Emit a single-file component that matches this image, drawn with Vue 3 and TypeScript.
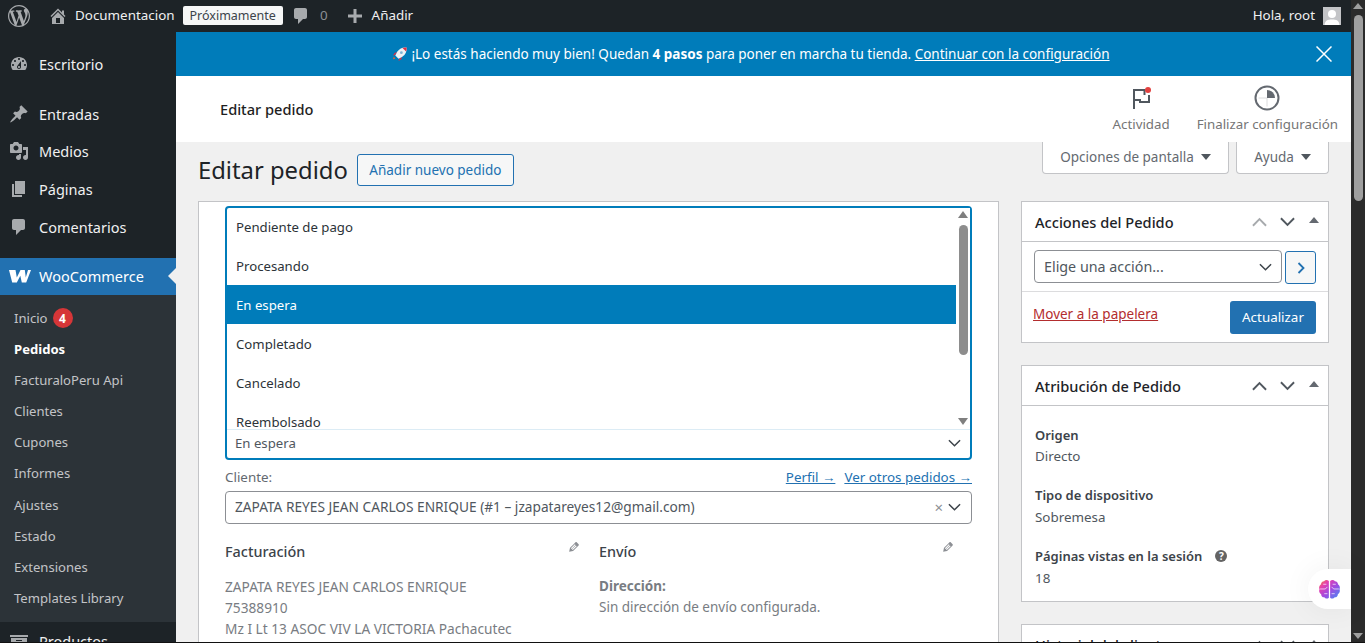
<script setup lang="ts">
const options: string[] = ['Pendiente de pago', 'Procesando', 'En espera', 'Completado', 'Cancelado', 'Reembolsado']
const subItems: string[] = ['FacturaloPeru Api', 'Clientes', 'Cupones', 'Informes', 'Ajustes', 'Estado', 'Extensiones', 'Templates Library']
const attribution: { label: string; value: string; help?: boolean }[] = [
  { label: 'Origen', value: 'Directo' },
  { label: 'Tipo de dispositivo', value: 'Sobremesa' },
  { label: 'Páginas vistas en la sesión', value: '18', help: true }
]
const paths = {
  wp: 'M20 10c0-5.51-4.49-10-10-10C4.48 0 0 4.49 0 10c0 5.52 4.48 10 10 10 5.51 0 10-4.48 10-10zM7.78 15.37L4.37 6.22c.55-.02 1.17-.08 1.17-.08.5-.06.44-1.13-.06-1.11 0 0-1.45.11-2.37.11-.18 0-.37 0-.58-.01C4.12 2.69 6.87 1.11 10 1.11c2.33 0 4.45.87 6.05 2.34-.68-.11-1.65.39-1.65 1.58 0 .74.45 1.36.9 2.1.35.61.55 1.36.55 2.46 0 1.49-1.4 5-1.4 5l-3.03-8.37c.54-.02.82-.17.82-.17.5-.05.44-1.25-.06-1.22 0 0-1.44.12-2.38.12-.87 0-2.33-.12-2.33-.12-.5-.03-.56 1.2-.06 1.22l.92.08 1.26 3.41zM17.41 10c.24-.64.74-1.87.43-4.25.7 1.29 1.05 2.71 1.05 4.25 0 3.29-1.73 6.24-4.4 7.78.97-2.59 1.94-5.2 2.92-7.78zM6.1 18.09C3.12 16.65 1.11 13.53 1.11 10c0-1.3.23-2.48.72-3.59C3.25 10.3 4.67 14.2 6.1 18.09zm4.03-6.63l2.58 6.98c-.86.29-1.76.45-2.71.45-.79 0-1.57-.11-2.29-.33.81-2.38 1.62-4.74 2.42-7.1z',
  home: 'M16 8.5l1.53 1.53-1.06 1.06L10 4.62l-6.47 6.47-1.06-1.06L10 2.5l4 4v-2h2v4zm-6-2.46l6 5.99V18H4v-5.97zM12 17v-5H8v5h4z',
  comment: 'M5 2h9c1.1 0 2 .9 2 2v7c0 1.1-.9 2-2 2h-2l-5 5v-5H5c-1.1 0-2-.9-2-2V4c0-1.1.9-2 2-2z',
  plus: 'M17 8.5v3h-5.5V17h-3v-5.5H3v-3h5.5V3h3v5.5H17z',
  dash: 'M3.76 16h12.48c1.1-1.37 1.76-3.11 1.76-5 0-4.42-3.58-8-8-8s-8 3.58-8 8c0 1.89.66 3.63 1.76 5zM10 4c.55 0 1 .45 1 1s-.45 1-1 1-1-.45-1-1 .45-1 1-1zM6 6c.55 0 1 .45 1 1s-.45 1-1 1-1-.45-1-1 .45-1 1-1zm8 0c.55 0 1 .45 1 1s-.45 1-1 1-1-.45-1-1 .45-1 1-1zm-5.37 5.55L12 7v6c0 1.1-.9 2-2 2s-2-.9-2-2c0-.57.24-1.08.63-1.45zM4 10c.55 0 1 .45 1 1s-.45 1-1 1-1-.45-1-1 .45-1 1-1zm12 0c.55 0 1 .45 1 1s-.45 1-1 1-1-.45-1-1 .45-1 1-1zm-5 3c0-.55-.45-1-1-1s-1 .45-1 1 .45 1 1 1 1-.45 1-1z',
  pin: 'M10.44 3.02l1.82-1.82 6.36 6.35-1.83 1.82c-1.05-.68-2.48-.57-3.41.36l-.75.75c-.92.93-1.04 2.35-.35 3.41l-1.83 1.82-2.41-2.41-2.8 2.79c-.42.42-3.38 2.71-3.8 2.29s1.86-3.39 2.28-3.81l2.79-2.79L4.1 9.36l1.83-1.82c1.05.69 2.48.57 3.4-.36l.75-.75c.93-.92 1.05-2.35.36-3.41z',
  media: 'M13 11V4c0-.55-.45-1-1-1h-1.67L9 1H5L3.67 3H2c-.55 0-1 .45-1 1v7c0 .55.45 1 1 1h10c.55 0 1-.45 1-1zM7 4.5c1.38 0 2.5 1.12 2.5 2.5S8.38 9.5 7 9.5 4.5 8.38 4.5 7 5.62 4.5 7 4.5zM14 6h5v10.5c0 1.38-1.12 2.5-2.5 2.5S14 17.88 14 16.5s1.12-2.5 2.5-2.5c.17 0 .34.02.5.05V9h-3V6zm-4 8.05V13h2v3.5c0 1.38-1.12 2.5-2.5 2.5S7 17.88 7 16.5 8.12 14 9.5 14c.17 0 .34.02.5.05z',
  page: 'M6 15V2h10v13H6zm-1 1h8v2H3V5h2v11z',
  archive: 'M19 4v2H1V4h18zM2 7h16v10H2V7zm11 3V9H7v1h6z',
  edit: 'M13.89 3.39l2.71 2.72c.46.46.42 1.24.03 1.64l-8.01 8.02-5.56 1.16 1.16-5.58s7.6-7.63 7.99-8.03c.39-.39 1.22-.39 1.68.07zm-2.73 2.79l-5.59 5.61 1.11 1.11 5.54-5.65zm-2.97 8.23l5.58-5.6-1.07-1.08-5.59 5.6z'
}
const menuTop = [
  { label: 'Entradas', icon: paths.pin },
  { label: 'Medios', icon: paths.media },
  { label: 'Páginas', icon: paths.page },
  { label: 'Comentarios', icon: paths.comment }
]
const boxes = [
  { title: 'Acciones del Pedido', dim: true },
  { title: 'Atribución de Pedido', dim: false }
]
</script>

<template>
  <div class="stage">
    <div class="window">
      <div class="page">
        <header class="adminbar">
          <svg class="wp" viewBox="0 0 20 20"><path :d="paths.wp" /></svg>
          <svg class="home" viewBox="0 0 20 20"><path :d="paths.home" /></svg>
          <span class="site">Documentacion</span>
          <span class="soon">Próximamente</span>
          <svg class="bubble" viewBox="0 0 20 20"><path :d="paths.comment" /></svg>
          <span class="count">0</span>
          <svg class="plus" viewBox="0 0 20 20"><path :d="paths.plus" /></svg>
          <span class="add">Añadir</span>
          <span class="hello">Hola, root</span>
          <span class="avatar">
            <svg viewBox="0 0 18 18"><circle cx="9" cy="7" r="4" fill="#fff" /><path d="M1.5 18c.5-4.500 3-5.500 7.500-5.500s7 1 7.500 5.500z" fill="#fff" /></svg>
          </span>
        </header>
        <div class="under">
          <nav class="sidebar">
            <a class="mi">
              <svg viewBox="0 0 20 20"><path :d="paths.dash" /></svg><span>Escritorio</span>
            </a>
            <div class="group">
              <a v-for="m in menuTop" :key="m.label" class="mi">
                <svg viewBox="0 0 20 20"><path :d="m.icon" /></svg><span>{{ m.label }}</span>
              </a>
            </div>
            <a class="mi woo">
              <svg class="wooicon" viewBox="0 0 22 14"><path d="M0 1H6.500L7.800 8.500 11.500 1H15.800L16.800 8.500 19 1H22L17.200 13.500H12.800L11.300 6.800 7.800 13.500H3.200Z" fill="#fff" /></svg>
              <span>WooCommerce</span>
            </a>
            <div class="sub">
              <a class="si">Inicio <b class="badge">4</b></a>
              <a class="si on">Pedidos</a>
              <a v-for="s in subItems" :key="s" class="si">{{ s }}</a>
            </div>
            <a class="mi">
              <svg viewBox="0 0 20 20"><path :d="paths.archive" /></svg><span>Productos</span>
            </a>
          </nav>
          <main class="main">
            <div class="banner">
              <svg class="rocket" viewBox="0 0 16 16">
                <path d="M2 10 1 13l2.500-.5z" fill="#e8622c" />
                <path d="M3 8.500 1 9l2-3 2.500-.5zM7.500 13 7 15l3-2 .5-2.500z" fill="#dd2e44" />
                <path d="M15.500.5c-4-.5-7.500 1-10 4.500L3.500 9l3.500 3.500 4-2c3.500-2.500 5-6 4.500-10z" fill="#eef2f5" />
                <path d="M15.500.5c-1.500-.2-3 0-4.300.5l3.800 3.800c.5-1.300.7-2.800.5-4.300z" fill="#dd2e44" />
                <circle cx="10" cy="6" r="1.500" fill="#7fb4d6" />
              </svg>
              <span class="btext">¡Lo estás haciendo muy bien! Quedan <b>4 pasos</b> para poner en marcha tu tienda. <u>Continuar con la configuración</u></span>
              <svg class="bclose" viewBox="0 0 16 16"><path d="M.5.5l15 15M15.500.5l-15 15" stroke="#fff" stroke-width="1.500" fill="none" /></svg>
            </div>
            <div class="wchead">
              <span class="wctitle">Editar pedido</span>
              <div class="wcact act1">
                <svg width="24" height="24" viewBox="0 0 24 24">
                  <path d="M5 24V5h10.500v5M5 15h6v2h9V10" fill="none" stroke="#50575e" stroke-width="2" />
                  <circle cx="19" cy="5" r="3" fill="#e2413f" />
                </svg>
                <span>Actividad</span>
              </div>
              <div class="wcact act2">
                <svg width="26" height="26" viewBox="0 0 26 26">
                  <path d="M13 13v8.500M13 13H4.500" stroke="#dcdcde" stroke-width="1" fill="none" />
                  <circle cx="13" cy="13" r="11.500" fill="none" stroke="#646970" stroke-width="2" />
                  <path d="M13 5v8h8a8 8 0 0 0-8-8z" fill="#646970" />
                </svg>
                <span>Finalizar configuración</span>
              </div>
            </div>
            <div class="content">
              <div class="chead">
                <div class="ctitle">
                  <h1>Editar pedido</h1>
                  <a class="addnew">Añadir nuevo pedido</a>
                </div>
                <div class="tabs">
                  <div class="tab t1">Opciones de pantalla <i class="caret"></i></div>
                  <div class="tab t2">Ayuda <i class="caret"></i></div>
                </div>
              </div>
              <div class="cols">
                <section class="left">
                  <div class="drop">
                    <div class="droplist">
                      <ul>
                        <li v-for="o in options" :key="o" :class="{ sel: o === 'En espera' }">{{ o }}</li>
                      </ul>
                      <div class="dscroll">
                        <i class="sup"></i>
                        <i class="sthumb"></i>
                        <i class="sdown"></i>
                      </div>
                    </div>
                    <div class="dropfield">
                      <span>En espera</span>
                      <svg class="chev" viewBox="0 0 14 8"><path d="M1 1l6 6 6-6" /></svg>
                    </div>
                  </div>
                  <div class="clientrow">
                    <span>Cliente:</span>
                    <span class="clinks"><u>Perfil →</u><u>Ver otros pedidos →</u></span>
                  </div>
                  <div class="clientsel">
                    <span class="cname">ZAPATA REYES JEAN CARLOS ENRIQUE (#1 – jzapatareyes12@gmail.com)</span>
                    <span class="cx">×</span>
                    <svg class="chev" viewBox="0 0 14 8"><path d="M1 1l6 6 6-6" /></svg>
                  </div>
                  <div class="addr">
                    <div class="acol">
                      <div class="ahead"><h3>Facturación</h3><svg viewBox="0 0 20 20"><path :d="paths.edit" /></svg></div>
                      <p>ZAPATA REYES JEAN CARLOS ENRIQUE</p>
                      <p>75388910</p>
                      <p>Mz I Lt 13 ASOC VIV LA VICTORIA Pachacutec</p>
                    </div>
                    <div class="acol">
                      <div class="ahead"><h3>Envío</h3><svg viewBox="0 0 20 20"><path :d="paths.edit" /></svg></div>
                      <p><b>Dirección:</b></p>
                      <p>Sin dirección de envío configurada.</p>
                    </div>
                  </div>
                </section>
                <aside class="right">
                  <section v-for="(b, i) in boxes" :key="b.title" class="box">
                    <div class="bhead">
                      <h2>{{ b.title }}</h2>
                      <svg class="hc" :class="{ dim: b.dim }" viewBox="0 0 16 10"><path d="M1 9l7-7 7 7" /></svg>
                      <svg class="hc" viewBox="0 0 16 10"><path d="M1 1l7 7 7-7" /></svg>
                      <i class="htri"></i>
                    </div>
                    <template v-if="i === 0">
                      <div class="actrow">
                        <div class="actsel"><span>Elige una acción...</span><svg class="chev" viewBox="0 0 14 8"><path d="M1 1l6 6 6-6" /></svg></div>
                        <div class="actgo"><svg viewBox="0 0 8 12"><path d="M1.500 1l5 5-5 5" /></svg></div>
                      </div>
                      <div class="actfoot">
                        <u>Mover a la papelera</u>
                        <button type="button">Actualizar</button>
                      </div>
                    </template>
                    <div v-else class="attr">
                      <div v-for="a in attribution" :key="a.label" class="aitem">
                        <h4>{{ a.label }}<i v-if="a.help" class="help">?</i></h4>
                        <p>{{ a.value }}</p>
                      </div>
                    </div>
                  </section>
                  <section class="box">
                    <div class="bhead">
                      <h2>Historial del cliente</h2>
                      <svg class="hc" viewBox="0 0 16 10"><path d="M1 9l7-7 7 7" /></svg>
                      <svg class="hc" viewBox="0 0 16 10"><path d="M1 1l7 7 7-7" /></svg>
                      <i class="htri"></i>
                    </div>
                  </section>
                </aside>
              </div>
            </div>
            <div class="brain">
              <svg viewBox="0 0 22 20" width="23" height="21">
                <defs>
                  <linearGradient id="bg" x1="0" y1="0" x2="1" y2="1">
                    <stop offset="0" stop-color="#f58a2c" />
                    <stop offset=".25" stop-color="#e53fb0" />
                    <stop offset=".55" stop-color="#a24be0" />
                    <stop offset="1" stop-color="#3f8cf5" />
                  </linearGradient>
                </defs>
                <path d="M10.400 1.800C9 .5 6.800.6 5.800 2 4 2 2.800 3.300 2.900 5 1.300 6 .6 8 1.400 9.700.6 11.500 1.300 13.500 3 14.500c0 1.800 1.300 3.100 3 3 1 1.500 3.200 1.600 4.400.4zM11.600 1.800c1.400-1.300 3.600-1.200 4.600.2 1.800 0 3 1.300 2.900 3 1.600 1 2.300 3 1.500 4.700.8 1.800.1 3.800-1.600 4.800 0 1.800-1.300 3.100-3 3-1 1.500-3.200 1.600-4.400.4z" fill="url(#bg)" />
                <path d="M2 9.500h5l2-2M5 5h3M6 14h3M20 9.500h-5l-2-2M17 5h-3M16 14h-3" fill="none" stroke="#fff" stroke-width=".8" opacity=".8" />
              </svg>
            </div>
          </main>
        </div>
      </div>
      <div class="vscroll">
        <i class="vup"></i>
        <i class="vthumb"></i>
        <i class="vspace"></i>
        <i class="vdown"></i>
      </div>
    </div>
    <div class="edge"></div>
  </div>
</template>

<style>
html, body { margin: 0; padding: 0; overflow: hidden; background: #f0f0f0; }
</style>

<style scoped>
.stage {
  width: 1365px; height: 643px; display: flex; flex-direction: column; overflow: hidden;
  font-family: "Noto Sans", "Open Sans", sans-serif; font-size: 13.400px; color: #3c434a;
}
.window { flex: 1; min-height: 0; display: flex; }
.edge { height: 1px; background: #111; }
.page { flex: 1; min-width: 0; display: flex; flex-direction: column; }
.vscroll { width: 14px; background: #2b2b2b; display: flex; flex-direction: column; align-items: center; padding-top: 3px; }
.vup, .vdown { width: 0; height: 0; border-left: 5px solid transparent; border-right: 5px solid transparent; }
.vup { border-bottom: 6px solid #9f9f9f; }
.vdown { border-top: 6px solid #9f9f9f; margin-bottom: 3px; }
.vthumb { width: 9px; height: 186px; margin-top: 6px; background: #9f9f9f; border-radius: 5px; }
.vspace { flex: 1; }

.adminbar { height: 32px; flex: none; background: #1d2327; display: flex; align-items: center; color: #f0f0f1; font-size: 13.400px; white-space: nowrap; }
.adminbar svg { fill: #a7aaad; flex: none; }
.wp { width: 22px; height: 22px; margin-left: 8px; }
.home { width: 20px; height: 20px; margin-left: 18px; }
.site { margin-left: 7px; margin-bottom: 2px; }
.soon { margin-left: 8px; background: #f6f7f7; color: #3c434a; height: 19px; line-height: 19px; padding: 0 7px; border-radius: 2px; font-size: 12.500px; margin-bottom: 2px; }
.bubble { width: 20px; height: 20px; margin-left: 8px; }
.count { margin-left: 9px; color: #8c8f94; margin-bottom: 2px; }
.plus { width: 20px; height: 20px; margin-left: 17px; }
.add { margin-left: 7px; margin-bottom: 2px; }
.hello { margin-left: auto; margin-bottom: 2px; }
.avatar { width: 18px; height: 18px; background: #c3c4c7; margin-left: 8px; margin-right: 10px; display: block; }
.avatar svg { display: block; width: 18px; height: 18px; }

.under { flex: 1; min-height: 0; display: flex; }
.sidebar { width: 176px; flex: none; background: #1d2327; padding-top: 13px; overflow: hidden; }
.mi { display: flex; align-items: center; height: 38px; color: #f0f0f1; font-size: 14.500px; position: relative; }
.mi svg { width: 20px; height: 20px; margin-left: 9px; margin-right: 10px; fill: #a7aaad; flex: none; }
.group { margin-top: 12px; margin-bottom: 12.600px; }
.group .mi { height: 37.600px; }
.woo { background: #2271b1; color: #fff; height: 37px; padding-bottom: 1px; box-sizing: border-box; }
.woo .wooicon { width: 22px; height: 14px; margin-left: 9px; margin-right: 8px; }
.woo::after { content: ""; position: absolute; right: 0; top: 10px; border: 8px solid transparent; border-right-color: #f0f0f0; border-left: 0; }
.sub { background: #2c3338; padding: 7.500px 0 8.500px; }
.si { display: flex; align-items: center; height: 31.100px; padding-left: 14px; color: #c3c4c7; font-size: 13.100px; }
.si.on { color: #fff; font-weight: 700; }
.badge { display: inline-flex; align-items: center; justify-content: center; width: 20px; height: 20px; border-radius: 50%; background: #d63638; color: #fff; font-size: 12px; margin-left: 5px; }

.main { flex: 1; min-width: 0; display: flex; flex-direction: column; position: relative; }
.banner { height: 44px; flex: none; box-sizing: border-box; padding-right: 25px; background: #007cba; color: #fff; display: flex; align-items: center; justify-content: center; position: relative; font-size: 13.500px; }
.rocket { width: 15px; height: 15px; margin-right: 4px; }
.banner b { font-weight: 700; }
.bclose { position: absolute; right: 19px; top: 14px; width: 16px; height: 16px; }
.wchead { height: 66px; flex: none; background: #fff; display: flex; align-items: flex-start; padding: 0 13px 0 44px; }
.wctitle { font-size: 14.600px; font-weight: 500; color: #1e1e1e; margin-top: 23px; margin-right: auto; }
.wcact { display: flex; flex-direction: column; align-items: center; color: #757575; font-size: 13.300px; }
.wcact span { white-space: nowrap; }
.act1 { margin-top: 9px; margin-right: 27px; }
.act1 span { margin-top: 6px; }
.act2 { margin-top: 9px; }
.act2 span { margin-top: 4px; }

.content { flex: 1; min-height: 0; background: #f0f0f0; padding: 0 22px; overflow: hidden; }
.chead { height: 59px; display: flex; justify-content: space-between; align-items: flex-start; }
.ctitle { display: flex; align-items: center; margin-top: 12px; }
h1 { margin: 0; font-size: 23.800px; font-weight: 400; color: #1d2327; line-height: 32px; }
.addnew { margin-left: 9px; height: 30px; line-height: 30px; padding: 0 11.500px; border: 1px solid #2271b1; color: #2271b1; background: #f6f7f7; border-radius: 3px; font-size: 13.500px; }
.tabs { display: flex; gap: 7px; }
.tab { background: #fff; border: 1px solid #c3c4c7; border-top: 0; border-radius: 0 0 4px 4px; color: #646970; display: flex; align-items: center; justify-content: center; gap: 7px; font-size: 13.500px; box-sizing: content-box; padding-bottom: 2px; height: 29px; }
.t1 { width: 185px; }
.t2 { width: 91px; }
.caret { width: 0; height: 0; border-left: 5px solid transparent; border-right: 5px solid transparent; border-top: 6px solid #50575e; }

.cols { display: flex; gap: 22px; align-items: flex-start; }
.left { width: 801px; flex: none; box-sizing: border-box; background: #fff; border: 1px solid #c3c4c7; border-bottom: 0; padding: 4px 26px 0; height: 460px; }
.drop { height: 254px; box-sizing: border-box; border: 2px solid #007cba; border-radius: 4px; display: flex; flex-direction: column; }
.droplist { height: 221px; display: flex; overflow: hidden; flex: none; }
.droplist ul { flex: 1; margin: 0 0 0 -1px; padding: 0; list-style: none; font-size: 13.200px; }
.droplist li { height: 39px; line-height: 40.500px; padding-left: 10px; color: #2c3338; }
.droplist li:first-child { height: 38px; line-height: 38px; }
.droplist li.sel { background: #007cba; color: #fff; }
.dscroll { width: 14px; flex: none; display: flex; flex-direction: column; align-items: center; padding-top: 3px; background: #fff; }
.sup, .sdown { width: 0; height: 0; border-left: 5px solid transparent; border-right: 5px solid transparent; }
.sup { border-bottom: 7px solid #7f7f7f; }
.sdown { border-top: 7px solid #7f7f7f; margin-top: auto; margin-bottom: 4px; }
.sthumb { width: 9px; height: 130px; margin-top: 7px; background: #8d8d8d; border-radius: 5px; }
.dropfield { flex: 1; border-top: 1px solid #dcecf5; display: flex; align-items: center; padding: 0 9px 2px 8px; justify-content: space-between; color: #50575e; font-size: 13.200px; }
.chev { width: 13px; height: 8px; fill: none; flex: none; }
.chev path { fill: none; stroke: #3c434a; stroke-width: 1.600; }
.clientrow { display: flex; justify-content: space-between; color: #646970; margin-top: 8px; height: 23px; line-height: 19px; }
.clinks { display: flex; gap: 9px; color: #2271b1; }
.clientsel { height: 33px; box-sizing: border-box; border: 1px solid #8c8f94; border-radius: 4px; display: flex; align-items: center; padding: 0 10px 2px 9px; color: #50575e; font-size: 13.700px; }
.cname { flex: 1; }
.cx { color: #8c8f94; font-size: 15px; margin-right: 5px; }
.addr { display: flex; gap: 18px; margin-top: 18px; }
.acol { width: 356px; flex: none; }
.ahead { display: flex; justify-content: space-between; height: 22px; }
.ahead svg { width: 14px; height: 14px; fill: #8c8f94; margin-top: -2px; }
.ahead h3 { margin: 0; font-size: 14.400px; font-weight: 500; line-height: 20px; color: #3c434a; }
.acol p { margin: 0; height: 21px; line-height: 21px; color: #787c82; white-space: nowrap; font-size: 13.700px; }
.acol + .acol p { font-size: 13.500px; }
.ahead + p { margin-top: 12px; }

.right { width: 308px; flex: none; display: flex; flex-direction: column; gap: 22px; }
.box { background: #fff; border: 1px solid #c3c4c7; box-sizing: border-box; }
.bhead { height: 40px; box-sizing: border-box; border-bottom: 1px solid #c3c4c7; display: flex; align-items: center; padding: 1px 9px 0 13px; }
.bhead h2 { flex: 1; margin: 0; font-size: 14.600px; font-weight: 500; color: #1d2327; }
.hc { width: 15px; height: 10px; fill: none; margin-right: 13px; margin-top: -1px; }
.hc path { stroke: #50575e; stroke-width: 2; fill: none; }
.hc.dim path { stroke: #a7aaad; }
.htri { width: 0; height: 0; border-left: 5px solid transparent; border-right: 5px solid transparent; border-bottom: 6px solid #646970; margin-top: -5px; margin-left: 1px; }
.actrow { display: flex; gap: 3px; padding: 8px 12px 7px; border-bottom: 1px solid #dcdcde; height: 50px; box-sizing: border-box; }
.actsel { width: 248px; height: 33px; box-sizing: border-box; border: 1px solid #8c8f94; border-radius: 4px; display: flex; align-items: center; justify-content: space-between; padding: 0 9px 0 9px; color: #50575e; font-size: 14.300px; }
.actgo { width: 31px; height: 33px; margin-top: 1px; box-sizing: border-box; border: 1px solid #2271b1; border-radius: 3px; background: #f6f7f7; display: flex; align-items: center; justify-content: center; }
.actgo svg { width: 8px; height: 12px; fill: none; }
.actgo path { stroke: #2271b1; stroke-width: 1.800; fill: none; }
.actfoot { display: flex; justify-content: space-between; align-items: center; padding: 9px 12px 9px 11px; height: 50px; box-sizing: border-box; }
.actfoot u { color: #b32d2e; margin-top: -6px; font-size: 13.500px; }
.actfoot button { width: 86px; height: 33px; border: 0; border-radius: 3px; background: #2271b1; color: #fff; font: inherit; padding: 0; }
.attr { padding: 19px 13px 10px; }
.aitem { height: 60px; }
.aitem:nth-child(2) { height: 61px; }
.aitem:nth-child(2) p { margin-top: 2px; }
.aitem h4 { margin: 0; font-size: 13px; font-weight: 600; color: #3c434a; line-height: 20px; display: flex; align-items: center; }
.aitem p { margin: 1px 0 0; line-height: 20px; color: #50575e; }
.help { display: inline-flex; width: 12px; height: 12px; border-radius: 50%; background: #646464; color: #fff; font-size: 10px; font-weight: 700; font-style: normal; align-items: center; justify-content: center; margin-left: 13px; }
.aitem:last-child { height: 45px; }
.aitem:last-child p { margin-top: 2px; }

.brain { position: absolute; right: 0; top: 537px; width: 43px; height: 40px; background: #fff; border-radius: 20px 0 0 20px; display: flex; align-items: center; padding-left: 10px; box-sizing: border-box; box-shadow: 0 0 30px rgba(0, 0, 0, .06); }
</style>
